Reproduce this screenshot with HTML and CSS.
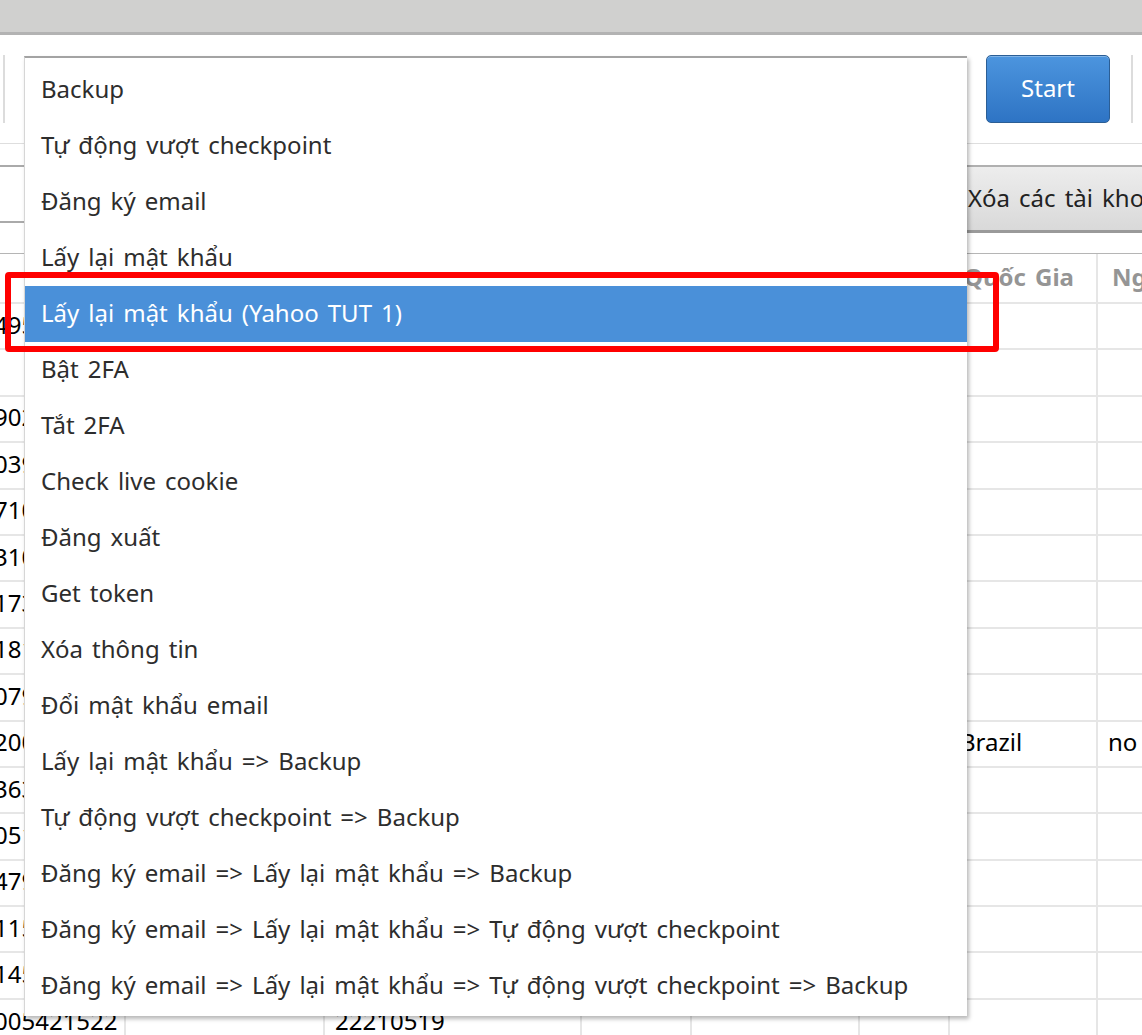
FILE: index.html
```html
<!DOCTYPE html>
<html lang="vi">
<head>
<meta charset="utf-8">
<title>Tool</title>
<link rel="stylesheet" href="styles.css">
</head>
<body>
<div class="app">
  <div class="titlebar"></div>
  <div class="toolbar">
    <div class="sep"></div>
    <div class="spacer"></div>
    <button class="btn-start">Start</button>
    <div class="sep sep-right"></div>
  </div>
  <div class="actions">
    <div class="field"></div>
    <div class="spacer"></div>
    <button class="btn-gray">Xóa các tài khoản đã chọn</button>
  </div>
  <div class="table">
    <div class="row head">
      <div class="cell h1">UID</div><div class="cell">Mật khẩu</div><div class="cell">Email</div><div class="cell">Pass</div><div class="cell">2FA</div><div class="cell">Cookie</div><div class="cell">Quốc Gia</div><div class="cell">Ngày</div>
    </div>
    <div class="row"><div class="cell c1">49531826</div><div class="cell"></div><div class="cell"></div><div class="cell"></div><div class="cell"></div><div class="cell"></div><div class="cell"></div><div class="cell"></div></div>
    <div class="row"><div class="cell c1"></div><div class="cell"></div><div class="cell"></div><div class="cell"></div><div class="cell"></div><div class="cell"></div><div class="cell"></div><div class="cell"></div></div>
    <div class="row"><div class="cell c1">90274153</div><div class="cell"></div><div class="cell"></div><div class="cell"></div><div class="cell"></div><div class="cell"></div><div class="cell"></div><div class="cell"></div></div>
    <div class="row"><div class="cell c1">03986214</div><div class="cell"></div><div class="cell"></div><div class="cell"></div><div class="cell"></div><div class="cell"></div><div class="cell"></div><div class="cell"></div></div>
    <div class="row"><div class="cell c1">71052398</div><div class="cell"></div><div class="cell"></div><div class="cell"></div><div class="cell"></div><div class="cell"></div><div class="cell"></div><div class="cell"></div></div>
    <div class="row"><div class="cell c1">31047725</div><div class="cell"></div><div class="cell"></div><div class="cell"></div><div class="cell"></div><div class="cell"></div><div class="cell"></div><div class="cell"></div></div>
    <div class="row"><div class="cell c1">17368140</div><div class="cell"></div><div class="cell"></div><div class="cell"></div><div class="cell"></div><div class="cell"></div><div class="cell"></div><div class="cell"></div></div>
    <div class="row"><div class="cell c1">18129057</div><div class="cell"></div><div class="cell"></div><div class="cell"></div><div class="cell"></div><div class="cell"></div><div class="cell"></div><div class="cell"></div></div>
    <div class="row"><div class="cell c1">07963512</div><div class="cell"></div><div class="cell"></div><div class="cell"></div><div class="cell"></div><div class="cell"></div><div class="cell"></div><div class="cell"></div></div>
    <div class="row"><div class="cell c1">20081546</div><div class="cell"></div><div class="cell"></div><div class="cell"></div><div class="cell"></div><div class="cell"></div><div class="cell">Brazil</div><div class="cell">no</div></div>
    <div class="row"><div class="cell c1">36357201</div><div class="cell"></div><div class="cell"></div><div class="cell"></div><div class="cell"></div><div class="cell"></div><div class="cell"></div><div class="cell"></div></div>
    <div class="row"><div class="cell c1">05193674</div><div class="cell"></div><div class="cell"></div><div class="cell"></div><div class="cell"></div><div class="cell"></div><div class="cell"></div><div class="cell"></div></div>
    <div class="row"><div class="cell c1">47920318</div><div class="cell"></div><div class="cell"></div><div class="cell"></div><div class="cell"></div><div class="cell"></div><div class="cell"></div><div class="cell"></div></div>
    <div class="row"><div class="cell c1">11584620</div><div class="cell"></div><div class="cell"></div><div class="cell"></div><div class="cell"></div><div class="cell"></div><div class="cell"></div><div class="cell"></div></div>
    <div class="row"><div class="cell c1">14573916</div><div class="cell"></div><div class="cell"></div><div class="cell"></div><div class="cell"></div><div class="cell"></div><div class="cell"></div><div class="cell"></div></div>
    <div class="row"><div class="cell c1">005421522</div><div class="cell"></div><div class="cell">22210519</div><div class="cell"></div><div class="cell"></div><div class="cell"></div><div class="cell"></div><div class="cell"></div></div>
  </div>

  <ul class="menu">
    <li>Backup</li>
    <li>Tự động vượt checkpoint</li>
    <li>Đăng ký email</li>
    <li>Lấy lại mật khẩu</li>
    <li class="selected">Lấy lại mật khẩu (Yahoo TUT 1)</li>
    <li>Bật 2FA</li>
    <li>Tắt 2FA</li>
    <li>Check live cookie</li>
    <li>Đăng xuất</li>
    <li>Get token</li>
    <li>Xóa thông tin</li>
    <li>Đổi mật khẩu email</li>
    <li>Lấy lại mật khẩu =&gt; Backup</li>
    <li>Tự động vượt checkpoint =&gt; Backup</li>
    <li>Đăng ký email =&gt; Lấy lại mật khẩu =&gt; Backup</li>
    <li>Đăng ký email =&gt; Lấy lại mật khẩu =&gt; Tự động vượt checkpoint</li>
    <li>Đăng ký email =&gt; Lấy lại mật khẩu =&gt; Tự động vượt checkpoint =&gt; Backup</li>
  </ul>
  <div class="highlight-box"></div>
</div>
</body>
</html>
```

FILE: styles.css
```css
* { box-sizing: border-box; }
html, body {
  margin: 0;
  padding: 0;
  background: #ffffff;
}
body {
  width: 1142px;
  height: 1035px;
  overflow: hidden;
  font-family: "Noto Sans", "DejaVu Sans", sans-serif;
  font-size: 24px;
  word-spacing: 2.8px;
  color: #000;
}
.app {
  position: relative;
  width: 1142px;
  height: 1035px;
  overflow: hidden;
}
.titlebar {
  height: 35px;
  background: #d0d0cf;
  border-bottom: 3px solid #b3b3b3;
}
.toolbar {
  height: 109px;
  padding-top: 20px;
  display: flex;
  align-items: flex-start;
  border-bottom: 1px solid #dedede;
}
.spacer { flex: 1; }
.sep {
  width: 2px;
  height: 68px;
  margin-left: 3px;
  background: #dcdcdc;
}
.sep-right { margin-left: 21px; margin-right: 9px; }
.btn-start {
  width: 124px;
  height: 68px;
  border: 1px solid #2b5e95;
  border-radius: 5px;
  background: linear-gradient(#4c95de, #2e74c4);
  color: #fff;
  font-family: inherit;
  font-size: 24px;
  padding: 0 0 3px 0;
  box-shadow: inset 0 1px 0 rgba(255,255,255,0.3);
}
.actions {
  height: 89px;
  padding-top: 21px;
  display: flex;
  align-items: flex-start;
}
.field {
  width: 200px;
  height: 58px;
  border-top: 2px solid #aaaaaa;
  border-bottom: 2px solid #aaaaaa;
}
.btn-gray {
  width: 400px;
  margin-right: -213px;
  height: 68px;
  padding: 0 0 3px 13px;
  text-align: left;
  border: 0;
  border-top: 2px solid #b0b0b0;
  border-bottom: 3px solid #9a9a9a;
  background: linear-gradient(#ededed, #d9d9d9);
  color: #222;
  font-family: inherit;
  font-size: 24px;
  word-spacing: 2.8px;
  white-space: nowrap;
}
.table {
  margin-top: 20px;
  border-top: 1px solid #b5b5b5;
  width: 1250px;
}
.row {
  display: grid;
  grid-template-columns: 126px 199px 257px 110px 168px 90px 148px 152px;
  height: 46.4px;
}
.row.head { height: 50px; }
.cell {
  border-right: 2px solid #e6e6e6;
  border-bottom: 2px solid #e6e6e6;
  padding: 0 0 4px 10px;
  display: flex;
  align-items: center;
  white-space: nowrap;
  overflow: hidden;
}
.head .cell {
  font-weight: bold;
  color: #959595;
  padding-left: 14px;
}
.head .cell.h1 { padding-left: 40px; }
.c1 {
  padding-left: 0;
  text-indent: -6px;
}
.menu {
  position: absolute;
  left: 24px;
  top: 56px;
  width: 943px;
  margin: 0;
  padding: 4px 0 2px 0;
  list-style: none;
  background: #ffffff;
  border-top: 2px solid #a3a3a3;
  border-left: 1px solid #d6d6d6;
  box-shadow: 2px 3px 4px rgba(0,0,0,0.28);
}
.menu li {
  height: 56px;
  line-height: 53px;
  padding-left: 16px;
  color: #2d2d2d;
  white-space: nowrap;
}
.menu li.selected {
  background: #4a90d9;
  color: #ffffff;
}
.highlight-box {
  position: absolute;
  left: 5px;
  top: 272px;
  width: 994px;
  height: 80px;
  border: 6px solid #ff0000;
  border-radius: 4px;
}
```
